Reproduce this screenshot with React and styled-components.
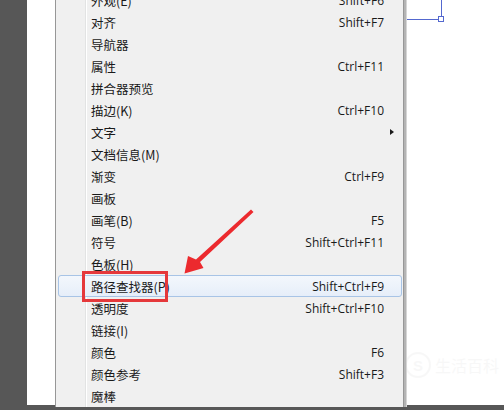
import React from 'react';
import styled, { createGlobalStyle } from 'styled-components';

const GlobalStyle = createGlobalStyle`
  html, body {
    margin: 0;
    padding: 0;
    background: #575757;
    overflow: hidden;
  }
`;

const items = [
  { label: '外观(E)', key: 'Shift+F6' },
  { label: '对齐', key: 'Shift+F7' },
  { label: '导航器' },
  { label: '属性', key: 'Ctrl+F11' },
  { label: '拼合器预览' },
  { label: '描边(K)', key: 'Ctrl+F10' },
  { label: '文字', sub: true },
  { label: '文档信息(M)' },
  { label: '渐变', key: 'Ctrl+F9' },
  { label: '画板' },
  { label: '画笔(B)', key: 'F5' },
  { label: '符号', key: 'Shift+Ctrl+F11' },
  { label: '色板(H)' },
  { label: '路径查找器(P)', key: 'Shift+Ctrl+F9', active: true },
  { label: '透明度', key: 'Shift+Ctrl+F10' },
  { label: '链接(I)' },
  { label: '颜色', key: 'F6' },
  { label: '颜色参考', key: 'Shift+F3' },
  { label: '魔棒' },
];

const App = () => {
  return (
    <>
      <GlobalStyle />
      <Stage>
        <Artboard>
          {/* selection edge of an object on the artboard */}
          <Overlay width="504" height="410" viewBox="0 0 504 410">
            <path d="M441.5 0 V16.5 M403 19.5 H438" stroke="#5468cf" strokeWidth="1" fill="none" />
            <rect x="438.5" y="16.5" width="5" height="5" fill="#fff" stroke="#5468cf" strokeWidth="1" />
          </Overlay>
          <Watermark>
            <WmLogo>S</WmLogo>
            <WmText>生活百科</WmText>
          </Watermark>
        </Artboard>

        <Menu>
          {items.map((it) => (
            <Row key={it.label} $active={it.active}>
              <Label>{it.label}</Label>
              {it.key && <Shortcut>{it.key}</Shortcut>}
              {it.sub && <SubArrow />}
            </Row>
          ))}
        </Menu>

        <RedBox />
        <Overlay width="504" height="410" viewBox="0 0 504 410">
          <polygon
            points="251,209.5 253.5,212 200,262 203.5,268 184.5,273.5 188,256 196,259.5"
            fill="#ec2a2e"
          />
        </Overlay>
      </Stage>
    </>
  );
};

const Stage = styled.div`
  position: relative;
  width: 504px;
  height: 410px;
  background: #575757;
  overflow: hidden;
`;

const Artboard = styled.div`
  margin-left: 27px;
  height: 405px;
  background: #ffffff;
`;

const Overlay = styled.svg`
  position: absolute;
  left: 0;
  top: 0;
  pointer-events: none;
`;

const Watermark = styled.div`
  position: absolute;
  left: 405px;
  top: 352px;
  display: flex;
  align-items: center;
  gap: 4px;
  opacity: 0.18;
`;

const WmLogo = styled.div`
  width: 22px;
  height: 22px;
  border-radius: 50%;
  border: 2px solid #d8d8d8;
  color: #d8d8d8;
  font: bold 15px "Liberation Sans", sans-serif;
  display: flex;
  align-items: center;
  justify-content: center;
`;

const WmText = styled.div`
  color: #d8d8d8;
  font: 16px "Noto Sans CJK SC", sans-serif;
`;

const Menu = styled.div`
  position: absolute;
  left: 55px;
  top: -11px;
  width: 347px;
  background: #f0f0f0 linear-gradient(to right, transparent 29px, #e2e3e3 29px, #e2e3e3 30px, #ffffff 30px, #ffffff 31px, transparent 31px);
  border-left: 1px solid #979797;
  border-right: 1px solid #979797;
  box-shadow: 2px 0 0 #b4b4b4, 3px 0 0 #d6d6d6;
  display: flex;
  flex-direction: column;
`;

const Row = styled.div`
  position: relative;
  display: flex;
  align-items: center;
  height: 22px;
  box-sizing: border-box;
  margin: 0 1px 0 2px;
  padding: 0 17px 0 32px;
  border: 1px solid ${(p) => (p.$active ? '#a8c4e6' : 'transparent')};
  border-radius: 3px;
  background: ${(p) =>
    p.$active ? 'linear-gradient(to bottom, #f3f7fc, #e6eef9)' : 'transparent'};
`;

const Label = styled.span`
  flex: 1;
  font: 12.5px "Noto Sans CJK SC", "Microsoft YaHei", sans-serif;
  color: #1a1a1a;
  white-space: nowrap;
`;

const Shortcut = styled.span`
  font: 12px "Open Sans", "Noto Sans", sans-serif;
  color: #1a1a1a;
  white-space: nowrap;
`;

const SubArrow = styled.span`
  position: absolute;
  right: 7px;
  top: 7px;
  width: 0;
  height: 0;
  border-top: 3.5px solid transparent;
  border-bottom: 3.5px solid transparent;
  border-left: 4px solid #1a1a1a;
`;

const RedBox = styled.div`
  position: absolute;
  left: 82px;
  top: 271px;
  width: 86px;
  height: 31px;
  box-sizing: border-box;
  border: 3px solid #e5383b;
`;

export default App;
